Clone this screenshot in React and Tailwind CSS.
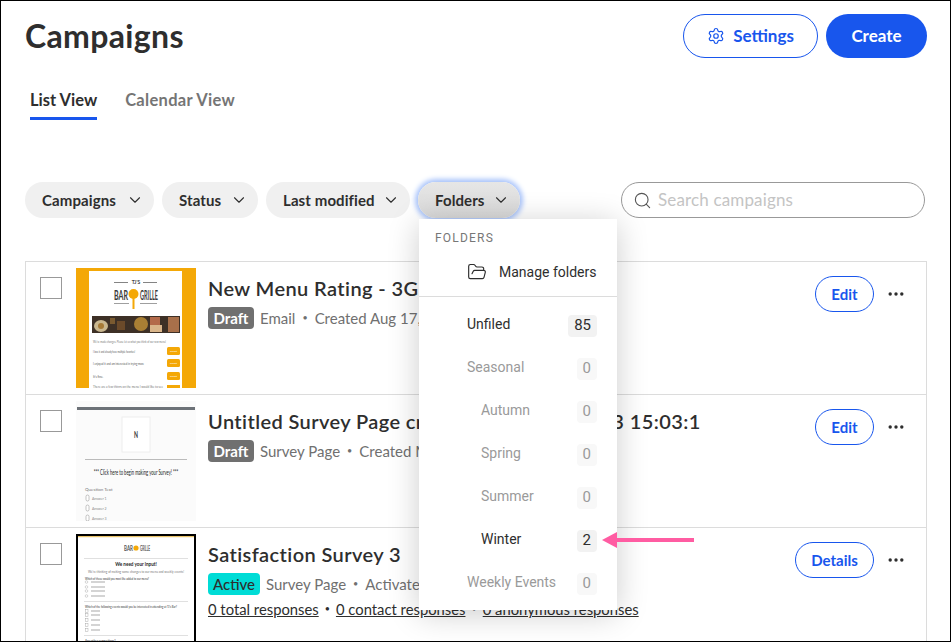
import React from "react";
import { ChevronDown, FolderOpen, Search, Settings } from "lucide-react";

const filters = [
  { name: "Campaigns", width: "w-[129px]" },
  { name: "Status", width: "w-[96px]" },
  { name: "Last modified", width: "w-[144px]" },
];

const folders = [
  { name: "Unfiled", count: 85 },
  { name: "Seasonal", count: 0, muted: true },
  { name: "Autumn", count: 0, muted: true, sub: true },
  { name: "Spring", count: 0, muted: true, sub: true },
  { name: "Summer", count: 0, muted: true, sub: true },
  { name: "Winter", count: 2, sub: true },
  { name: "Weekly Events", count: 0, muted: true },
];

const Dots = () => (
  <svg width="16" height="4" viewBox="0 0 16 4" className="text-[#2e2e2e]">
    <circle cx="2.2" cy="2" r="1.7" fill="currentColor" />
    <circle cx="8" cy="2" r="1.7" fill="currentColor" />
    <circle cx="13.8" cy="2" r="1.7" fill="currentColor" />
  </svg>
);

const MenuThumb = () => (
  <svg width="120" height="120" viewBox="0 0 120 120" className="block">
    <rect width="120" height="120" fill="#f4a807" />
    <rect x="13" y="3" width="93" height="117" fill="#fff" />
    <rect x="38" y="14" width="14" height="0.8" fill="#666" />
    <rect x="67" y="14" width="14" height="0.8" fill="#666" />
    <text x="60" y="16" textAnchor="middle" fontSize="5" fontWeight="700" fill="#444">TJ'S</text>
    <text x="38" y="32" fontSize="14" fontWeight="700" fill="#3a3a3a" textLength="14" lengthAdjust="spacingAndGlyphs">BAR</text>
    <text x="64" y="32" fontSize="14" fontWeight="700" fill="#3a3a3a" textLength="18" lengthAdjust="spacingAndGlyphs">GRILLE</text>
    <circle cx="57.5" cy="26" r="5" fill="#f4a807" />
    <rect x="56.5" y="30" width="2" height="11" fill="#f4a807" />
    <rect x="38" y="35" width="15" height="0.8" fill="#888" />
    <rect x="64" y="35" width="17" height="0.8" fill="#888" />
    <rect x="16" y="48" width="88" height="17" fill="#3d3026" />
    <ellipse cx="25" cy="58" rx="7" ry="6" fill="#c9b78f" />
    <circle cx="25" cy="58" r="3" fill="#a67a36" />
    <rect x="34" y="50" width="5" height="6" fill="#7a5a30" />
    <rect x="41" y="53" width="8" height="9" fill="#6b4a2a" />
    <circle cx="65" cy="56" r="7" fill="#a97f34" />
    <rect x="74" y="49" width="10" height="8" fill="#b36a4a" />
    <rect x="74" y="57" width="12" height="7" fill="#d9b58a" />
    <rect x="92" y="49" width="11" height="15" fill="#a8704a" />
    <text x="17" y="75" fontSize="3" fill="#777" textLength="73" lengthAdjust="spacingAndGlyphs">We've made changes. Please let us what you think of our new menu!</text>
    <text x="17" y="85" fontSize="3" fill="#555" textLength="42" lengthAdjust="spacingAndGlyphs">I love it and already have multiple favorites!</text>
    <text x="17" y="97" fontSize="3" fill="#555" textLength="51" lengthAdjust="spacingAndGlyphs">I enjoyed it and am interested in trying more</text>
    <text x="17" y="110" fontSize="3" fill="#555">It's fine.</text>
    <text x="17" y="119.5" fontSize="3" fill="#777" textLength="70" lengthAdjust="spacingAndGlyphs">There are a few things on the menu I would like to see</text>
    {[79, 91, 104].map((y) => (
      <g key={y}>
        <rect x="91" y={y} width="13" height="8" rx="1.5" fill="#f4a807" />
        <text x="97.5" y={y + 5} textAnchor="middle" fontSize="2.6" fill="#fff">Select</text>
      </g>
    ))}
    <rect x="91" y="117" width="13" height="3" fill="#f4a807" />
  </svg>
);

const BlankThumb = () => (
  <svg width="120" height="120" viewBox="0 0 120 120" className="block">
    <rect width="120" height="120" fill="#fbfbfb" />
    <rect x="1" y="6" width="118" height="3" fill="#6d7278" />
    <rect x="46" y="16" width="28" height="35" fill="#fff" stroke="#eee" />
    <text x="60" y="37" textAnchor="middle" fontSize="9" fontWeight="700" fill="#333" textLength="4" lengthAdjust="spacingAndGlyphs">N</text>
    <rect x="9" y="58" width="102" height="1" fill="#bbb" />
    <text transform="translate(60 74) scale(0.52 1)" textAnchor="middle" fontSize="8" fill="#222">*** Click here to begin making your Survey! ***</text>
    <text x="9" y="90" fontSize="4.5" fill="#777">Question Text</text>
    {[97, 107, 117].map((y, i) => (
      <g key={y}>
        <rect x="10" y={y - 3} width="3" height="6" rx="1.5" fill="#fff" stroke="#888" strokeWidth="0.5" />
        <text x="16" y={y + 1.5} fontSize="3.5" fill="#888">Answer {i + 1}</text>
      </g>
    ))}
  </svg>
);

const SurveyThumb = () => (
  <svg width="120" height="120" viewBox="0 0 120 120" className="block">
    <rect width="120" height="120" fill="#000" />
    <rect x="2" y="2" width="116" height="118" fill="#fff" />
    <rect x="2" y="2" width="116" height="1.2" fill="#e9c46a" />
    <text x="48" y="17" fontSize="7" fontWeight="700" fill="#555" textLength="9" lengthAdjust="spacingAndGlyphs">BAR</text>
    <text x="64" y="17" fontSize="7" fontWeight="700" fill="#555" textLength="10" lengthAdjust="spacingAndGlyphs">GRILLE</text>
    <circle cx="60" cy="14" r="2.6" fill="#f4a807" />
    <rect x="8" y="24" width="104" height="0.6" fill="#ccc" />
    <text x="60" y="32" textAnchor="middle" fontSize="4.6" fontWeight="700" fill="#222">We need your input!</text>
    <text x="60" y="38.5" textAnchor="middle" fontSize="2.8" fill="#777" textLength="96" lengthAdjust="spacingAndGlyphs">We're thinking of making some changes to our menu and weekly events!</text>
    <text x="9" y="45.5" fontSize="3" fill="#333" textLength="64" lengthAdjust="spacingAndGlyphs">Which of these would you most like added to our menu?</text>
    {[48, 53, 57, 62].map((y) => (
      <g key={y}>
        <circle cx="10.5" cy={y} r="1.3" fill="#fff" stroke="#999" strokeWidth="0.4" />
        <rect x="15" y={y - 0.5} width="14" height="1" fill="#aaa" />
      </g>
    ))}
    <rect x="8" y="67" width="104" height="0.6" fill="#ccc" />
    <text x="9" y="73.5" fontSize="3" fill="#333" textLength="92" lengthAdjust="spacingAndGlyphs">Which of the following events would you be interested in attending at TJ's Bar?</text>
    {[77, 81, 86, 91, 96].map((y) => (
      <g key={y}>
        <rect x="9.5" y={y - 1.3} width="2.5" height="2.5" fill="#fff" stroke="#999" strokeWidth="0.4" />
        <rect x="15" y={y - 0.5} width="9" height="1" fill="#aaa" />
      </g>
    ))}
    <rect x="8" y="101" width="104" height="0.6" fill="#ccc" />
    <text x="9" y="107.5" fontSize="3" fill="#333">Any other suggestions?</text>
  </svg>
);

const Row = ({ thumb, title, badge, active, meta, action, children }) => (
  <div className="flex h-[133px] border-b border-[#dcdcdc] pl-[14px] pr-[22px]">
    <div className="mt-[15px] h-[22px] w-[22px] shrink-0 border border-[#999]" />
    <div className="ml-[14px] mt-[6px] h-[120px] w-[120px] shrink-0 overflow-hidden">{thumb}</div>
    <div className="ml-[12px] w-[492px] shrink-0 overflow-hidden pt-[12px]">
      <div className="h-[28px] whitespace-nowrap text-[20px] font-semibold leading-[28px] tracking-[0.4px] text-[#2e2e2e]">{title}</div>
      <div className="mt-[5px] flex h-[22px] items-center whitespace-nowrap text-[15px] text-[#707070]">
        <span className={`rounded-[4px] text-center leading-[22px] ${active ? "w-[52px] bg-[#00dcd6] font-medium text-[#2e2e2e]" : "w-[46px] bg-[#707070] font-bold text-white"}`}>
          {badge}
        </span>
        <span className="ml-[6px]">{meta[0]}</span>
        <span className="mx-[7px] text-[9px]">•</span>
        <span>{meta[1]}</span>
      </div>
      {children}
    </div>
    <div className="ml-auto mt-[14px] flex h-[36px] items-center">
      <button className={`h-[36px] rounded-full border border-[#1856ed] bg-white text-[15px] font-bold text-[#1856ed] ${action === "Edit" ? "w-[59px]" : "w-[79px]"}`}>{action}</button>
      <div className="ml-[14px]"><Dots /></div>
    </div>
  </div>
);

export default function App() {
  return (
    <div className="relative h-[642px] w-[951px] overflow-hidden border border-black bg-white font-['Lato',sans-serif]">
      <div className="flex h-[57px] items-start justify-between pl-[24px] pr-[23px] pt-[13px]">
        <h1 className="text-[32px] font-bold leading-[44px] tracking-[0.35px] text-[#2e2e2e]">Campaigns</h1>
        <div className="flex gap-[8px]">
          <button className="flex h-[44px] w-[135px] items-center justify-center gap-[8px] rounded-full border border-[#1856ed] text-[17px] font-bold text-[#1856ed]">
            <Settings size={18} strokeWidth={1.6} />
            Settings
          </button>
          <button className="h-[44px] w-[101px] rounded-full bg-[#1856ed] text-[17px] font-bold text-white">Create</button>
        </div>
      </div>

      <div className="mt-[27px] flex h-[35px] items-start pl-[29px] text-[16.5px] font-bold leading-[30px]">
        <div className="h-[35px] border-b-[3px] border-[#1856ed] text-[#2e2e2e]">List View</div>
        <div className="ml-[28px] tracking-[0.3px] text-[#757575]">Calendar View</div>
      </div>

      <div className="mt-[62px] flex items-center pl-[24px]">
        <div className="flex gap-[8px]">
          {filters.map((f) => (
            <button key={f.name} className={`flex h-[36px] items-center justify-between rounded-full bg-[#f0f0f0] pl-[17px] pr-[10px] text-[15px] font-bold tracking-[0.1px] text-[#2e2e2e] ${f.width}`}>
              {f.name}
              <ChevronDown size={18} strokeWidth={1.5} />
            </button>
          ))}
          <button className="flex h-[36px] w-[102px] items-center justify-between rounded-full bg-gradient-to-b from-[#e6e6e6] to-[#d9d9d9] pl-[17px] pr-[10px] text-[15px] font-bold tracking-[0.1px] text-[#2e2e2e] shadow-[0_0_5px_3px_#a9c4fb]">
            Folders
            <ChevronDown size={18} strokeWidth={1.5} />
          </button>
        </div>
        <div className="ml-[101px] flex h-[36px] w-[304px] items-center gap-[6px] rounded-full border border-[#999] pl-[11px] text-[17px] tracking-[0.15px] text-[#c4c4c4]">
          <Search size={19} strokeWidth={1.4} className="text-[#555]" />
          Search campaigns
        </div>
      </div>

      <div className="ml-[24px] mt-[43px] w-[902px] border-x border-t border-[#dcdcdc]">
        <Row thumb={<MenuThumb />} title="New Menu Rating - 3G Test" badge="Draft" meta={["Email", "Created Aug 17, 2023"]} action="Edit" />
        <Row thumb={<BlankThumb />} title="Untitled Survey Page created on 2023/03/13 15:03:13" badge="Draft" meta={["Survey Page", "Created Mar 13, 2023"]} action="Edit" />
        <Row thumb={<SurveyThumb />} title="Satisfaction Survey 3" badge="Active" active meta={["Survey Page", "Activated Jun 6, 2022"]} action="Details">
          <div className="mt-[3px] flex items-center whitespace-nowrap text-[14.8px] text-[#2e2e2e]">
            <span className="underline">0 total responses</span>
            <span className="mx-[6px] text-[9px]">•</span>
            <span className="underline">0 contact responses</span>
            <span className="mx-[6px] text-[9px]">•</span>
            <span className="underline">0 anonymous responses</span>
          </div>
        </Row>
      </div>

      <div className="absolute left-[418px] top-[218px] w-[198px] bg-white pb-[5px] font-['Roboto',sans-serif] shadow-[0_4px_30px_rgba(0,0,0,0.2)]">
        <div className="px-[16px] pt-[13px] text-[12px] leading-[12px] tracking-[1.2px] text-[#777]">FOLDERS</div>
        <div className="flex h-[53px] items-center border-b border-[#dcdcdc] pl-[48px] pt-[4px] text-[14px] text-[#2e2e2e]">
          <FolderOpen size={20} strokeWidth={1.4} />
          <span className="ml-[12px]">Manage folders</span>
        </div>
        <div className="mt-[7px] pr-[20px]">
          {folders.map((f) => (
            <div key={f.name} className={`flex h-[43px] items-center justify-between text-[14px] ${f.sub ? "pl-[62px]" : "pl-[48px]"} ${f.muted ? "text-[#9a9a9a]" : "text-[#2e2e2e]"}`}>
              <span className="-mt-[2px]">{f.name}</span>
              <span className={`flex h-[22px] items-center justify-center rounded-[4px] px-[6px] text-[15px] ${f.muted ? "bg-[#f8f8f8]" : "bg-[#f2f2f2]"}`}>{f.count}</span>
            </div>
          ))}
        </div>
      </div>

      <svg width="92" height="16" viewBox="0 0 92 16" className="absolute left-[601px] top-[531px] text-[#ff5ca2]">
        <path d="M0 8 L15 0 V6 H92 V10 H15 V16 Z" fill="currentColor" />
      </svg>
    </div>
  );
}
